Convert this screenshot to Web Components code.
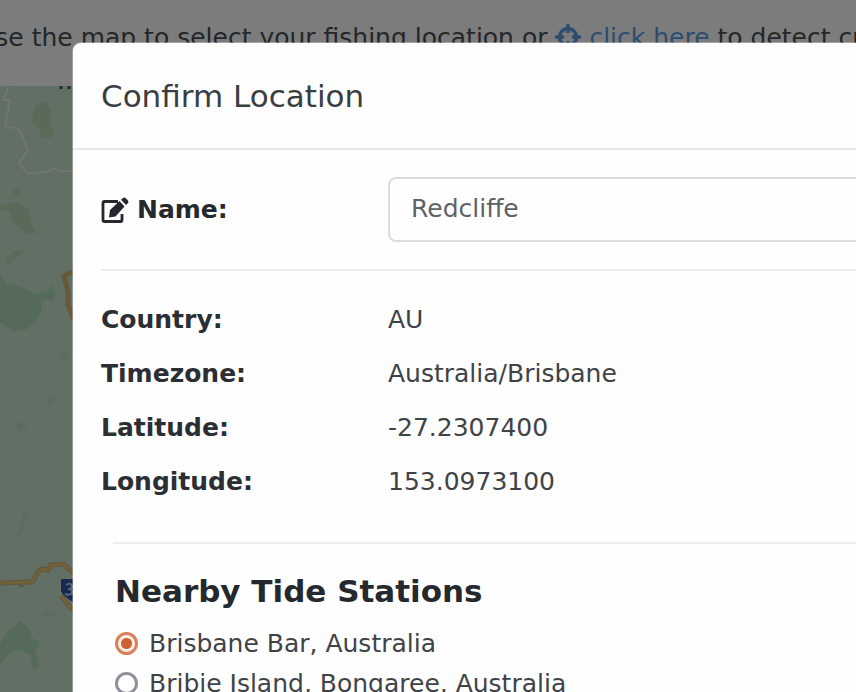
<!DOCTYPE html>
<html lang="en">
<head>
<meta charset="utf-8">
<title>Confirm Location</title>
<style>
html, body { margin: 0; height: 100%; overflow: hidden; }
body { font: 25px/37px "DejaVu Sans", sans-serif; color: #484c51; background: #f8f9fa; }
</style>
</head>
<body>
<location-page>
  <map-hint></map-hint>
  <region-map></region-map>
  <modal-dialog slot="modal" heading="Confirm Location">
    <name-field label="Name:" value="Redcliffe"></name-field>
    <location-facts></location-facts>
    <tide-stations></tide-stations>
  </modal-dialog>
</location-page>
<script>
const define = (name, html, setup) => customElements.define(name, class extends HTMLElement {
  constructor() {
    super();
    const t = document.createElement('template');
    t.innerHTML = html;
    this.attachShadow({ mode: 'open' }).append(t.content.cloneNode(true));
  }
  connectedCallback() { if (setup) setup(this, this.shadowRoot); }
});

define('location-page', `
<style>
:host { display: block; position: relative; height: 100vh; overflow: hidden; }
.page { display: flex; flex-direction: column; height: 100%; }
.backdrop { position: absolute; inset: 0; background: rgba(0,0,0,.5); }
.over { position: absolute; inset: 0; padding: 43px 0 0 73px; }
</style>
<div class="page"><slot></slot></div>
<div class="backdrop"></div>
<div class="over"><slot name="modal"></slot></div>`);

define('map-hint', `
<style>
:host { display: block; padding: 19px 0 30px; }
p { margin: 0 0 0 -23px; white-space: nowrap; }
a { color: #5a9ade; text-decoration: none; }
svg { width: 26px; height: 26px; vertical-align: -4px; }
</style>
<p>Use the map to select your fishing location or <a href="#"><svg viewBox="0 0 26 26" fill="none" stroke="currentColor" aria-hidden="true"><circle cx="13" cy="13" r="8.5" stroke-width="3.6"/><path d="M13 0v9M13 17v9M0 13h9M17 13h9" stroke-width="3.4"/></svg> click here</a> to detect current location</p>`);

define('region-map', `
<style>
:host { display: block; flex: 1; position: relative; overflow: hidden; background: #c2dec8; }
svg { display: block; width: 80px; height: 606px; }
.dots { position: absolute; left: 57px; top: -24px; }
</style>
<svg viewBox="0 86 80 606" fill="none" aria-hidden="true">
  <g fill="#b2d6b0">
    <path d="M37 103l9-1 5 8-1 14 4 8-4 6-9-1-2-9-8-7 3-10z"/>
    <path d="M0 206l16-4 13 8 2 14 6 9-10 1-8-6-7-8-2-8-10-2zM14 190l6-3-1 8-7 4z"/>
    <path d="M6 258l10-8 8 1-8 7-8 7z"/>
  </g>
  <g fill="#acd4b4">
    <path d="M0 273l6 10 15 4 14 7 12-2 4-7 5 8-2 6-13 2 1 10-7 11-8 7-14 3-13-10z"/>
    <path d="M0 644l9-15 12-8 9 9 2 8 8 4-5 9 4 16-7 3-1-16-14-4-8 4-9 10z"/>
  </g>
  <path fill="#bbd9c0" d="M25 510l-7 18-4 16 9-13 5-18zM45 400l8-5 5 6-9 7zM16 425l9-5 2 7-9 5zM43 612l9-3 4 5-9 6zM57 355l8-4 2 8-7 3z"/>
  <path d="M9 87L3 100h7L5 126l14 3 9 21-9 13 2 3 7 8 22-3 4-3 5 3h20" stroke="#edf2ed" stroke-width="2" stroke-opacity=".7"/>
  <path d="M80 272l-10 1-6 3 4 15v14l6 14" stroke="#c5b285" stroke-width="5"/>
  <path d="M80 272l-10 1-6 3 4 15v14l6 14" stroke="#d9b362" stroke-width="2"/>
  <path d="M0 583l32-1 5-8 4-5 7 1 3-5 12-1 8 7 5 4M21 583v4M61 596l8 10 9 8" stroke="#c4b080" stroke-width="5"/>
  <path d="M0 583l32-1 5-8 4-5 7 1 3-5 12-1 8 7 5 4M61 596l8 10 9 8" stroke="#e0c070" stroke-width="3"/>
  <path fill="#3055a6" d="M61 579h24v12q-2 9-10 12-12-6-14-12z"/>
  <path d="M66 585q5-3 6 1 0 3-4 3 5 0 4 4-2 3-7 1" stroke="#b7c5ec" stroke-width="2"/>
</svg>
<span class="dots">...</span>`);

define('modal-dialog', `
<style>
:host { display: block; }
section { box-sizing: border-box; width: calc(100% + 60px); min-height: 720px; background: #fefefe;
  border-radius: 8px; box-shadow: 0 0 0 1px rgba(255,255,255,.3); color: #3f4347; }
header { padding: 33px 28px 32px; border-bottom: 2px solid #e6e8ea; }
h1 { margin: 0; font-size: 31px; line-height: 40px; font-weight: 400; color: #3a3e43; }
.body { padding: 27px 28px; }
</style>
<section role="dialog" aria-labelledby="t"><header><h1 id="t"></h1></header><div class="body"><slot></slot></div></section>`,
(el, r) => { r.querySelector('h1').textContent = el.getAttribute('heading'); });

define('name-field', `
<style>
:host { display: grid; grid-template-columns: 287px 1fr; align-items: center; padding-bottom: 27px; border-bottom: 2px solid #e9ebec; }
label { display: flex; gap: 8px; align-items: center; font-weight: 700; color: #25282c; }
svg { width: 28px; height: 26px; }
input { box-sizing: border-box; width: 100%; height: 65px; padding: 0 21px 2px; border: 2px solid #d9dde1; border-radius: 8px; background: #fefefe; font: inherit; color: #5d6267; outline: 0; }
</style>
<label for="n"><svg viewBox="0 0 28 26" aria-hidden="true"><path d="M17 4.5H3.500Q2 4.500 2 6V23q0 1.500 1.500 1.500h16q1.500 0 1.500-1.500v-6" fill="none" stroke="currentColor" stroke-width="2.800"/><path fill="currentColor" d="M8 20.500l1-7.500L18.500 4l5 5.500L14.500 19.500zM20 2.700l2-1.700q1.500-1 3 .5l2 2q1 1.500 0 2.500l-2 2z"/></svg><span></span></label>
<input id="n" type="text">`,
(el, r) => { r.querySelector('span').textContent = el.getAttribute('label'); r.querySelector('input').value = el.getAttribute('value'); });

define('location-facts', `
<style>
:host { display: block; padding: 30px 0 42px; }
dl { display: grid; grid-template-columns: 287px 1fr; row-gap: 17px; margin: 0; }
dt { font-weight: 700; color: #2b2e33; }
dd { margin: 0; }
</style>
<dl><dt>Country:</dt><dd>AU</dd><dt>Timezone:</dt><dd>Australia/Brisbane</dd><dt>Latitude:</dt><dd>-27.2307400</dd><dt>Longitude:</dt><dd>153.0973100</dd></dl>`);

define('tide-stations', `
<style>
:host { display: block; margin-left: 12px; border-top: 2px solid #ebedee; padding: 27px 0 0 2px; }
fieldset { border: 0; margin: 0; padding: 0; }
legend { padding: 0; margin-bottom: 12px; font-size: 31px; line-height: 40px; font-weight: 700; color: #25282c; }
label { display: flex; align-items: center; gap: 11px; height: 40px; }
input { appearance: none; flex: none; box-sizing: border-box; width: 23px; height: 23px; margin: 0; border: 3px solid #8f909c; border-radius: 50%; background: #fff; }
input:checked { border-color: #d9805e; background: radial-gradient(circle, #cf5f35 5px, #fdeee6 6px); }
</style>
<fieldset><legend>Nearby Tide Stations</legend>
<label><input type="radio" name="s" checked>Brisbane Bar, Australia</label>
<label><input type="radio" name="s">Bribie Island, Bongaree, Australia</label>
</fieldset>`);
</script>
</body>
</html>
